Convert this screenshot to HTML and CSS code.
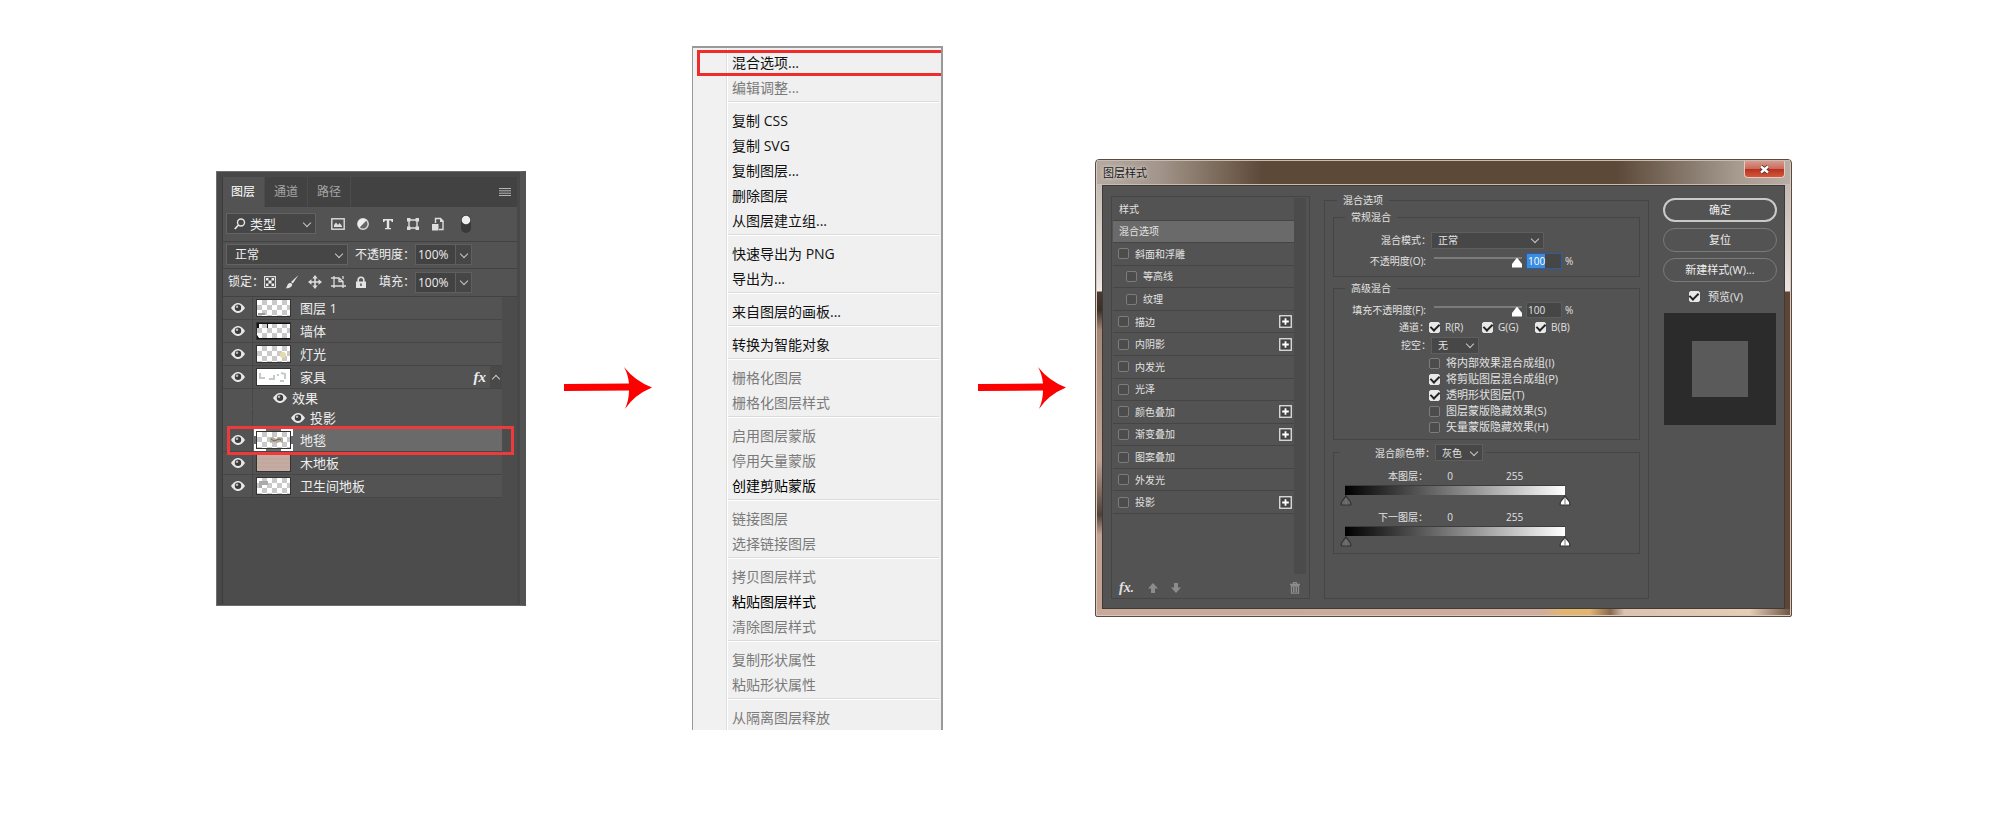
FILE: index.html
```html
<!DOCTYPE html>
<html lang="zh-CN">
<head>
<meta charset="utf-8">
<title>图层样式</title>
<link rel="stylesheet" href="styles.css">
</head>
<body>
<svg class="defs" aria-hidden="true">
  <defs>
    <pattern id="checker" width="10" height="10" patternUnits="userSpaceOnUse">
      <rect width="10" height="10" fill="#fff"/><rect x="5" width="5" height="5" fill="#c9c9c9"/><rect y="5" width="5" height="5" fill="#c9c9c9"/>
    </pattern>
    <symbol id="eye" viewBox="0 0 14 10">
      <path d="M0 5C3 .8 5 0 7 0s4 .8 7 5c-3 4.200-5 5-7 5S3 9.200 0 5z" fill="#e8e8e8"/>
      <circle cx="7" cy="4.800" r="3.200" fill="#3c3c3c"/><circle cx="6" cy="3.800" r="1.300" fill="#bbb"/>
    </symbol>
    <symbol id="plus" viewBox="0 0 13 13">
      <rect x=".75" y=".75" width="11.500" height="11.500" fill="#444" stroke="#e4e4e4" stroke-width="1.300"/><path d="M6.500 3.200v6.600M3.200 6.500h6.600" stroke="#fff" stroke-width="1.800"/>
    </symbol>
    <symbol id="stop" viewBox="0 0 12 11">
      <path d="M6 .8C5 3.500 1.200 6 1.200 8v2h9.600V8C10.800 6 7 3.500 6 .8z" stroke="#333" stroke-width="1.200"/><path d="M6 3v6.500" stroke="#777" stroke-width="1"/>
    </symbol>
    <symbol id="arrow" viewBox="0 0 88 42">
      <path d="M0 17L65 16.500Q64 7 60 0Q71 14 88 20.500Q70 28 61 42Q65 33 65 23.500L0 24z" fill="#fd0000"/>
    </symbol>
  </defs>
</svg>

<main class="steps">
  <section class="layers" aria-label="图层">
    <div class="layers-inner">
      <div class="tabs" role="tablist">
        <button class="tab active" role="tab">图层</button>
        <button class="tab" role="tab">通道</button>
        <button class="tab" role="tab">路径</button>
        <button class="panel-menu" aria-label="面板菜单"><svg width="12" height="8" viewBox="0 0 12 8"><path d="M0 .5h12M0 2.800h12M0 5.200h12M0 7.500h12" stroke="#b5b5b5"/></svg></button>
      </div>
      <div class="tools filter">
        <span class="pick filter-pick">
          <svg class="lens" width="12" height="12" viewBox="0 0 12 12" fill="none" stroke="#e4e4e4"><circle cx="7" cy="4.500" r="3.500" stroke-width="1.400"/><path d="M4.500 7L.8 11" stroke-width="1.800"/></svg>
          <select aria-label="过滤"><option>类型</option></select>
        </span>
        <div class="filter-icons">
          <svg width="14" height="12" viewBox="0 0 14 12"><rect x=".8" y=".8" width="12.400" height="10.400" fill="none" stroke="#ddd" stroke-width="1.400"/><path d="M3 9V7l2-2.500L7 7l1.500-2L11 8v1z" fill="#ddd"/></svg>
          <svg width="14" height="14" viewBox="0 0 14 14"><circle cx="7" cy="7" r="5.200" fill="#666" stroke="#ddd" stroke-width="1.400"/><path d="M3.300 10.700A5.200 5.200 0 0 1 10.700 3.300z" fill="#eee"/></svg>
          <svg width="14" height="12" viewBox="0 0 14 12"><path d="M2 1h10v3h-1.200L10 2.500H8.200V10H10v1.200H4V10h1.800V2.500H4L3.200 4H2z" fill="#e4e4e4"/></svg>
          <svg width="14" height="14" viewBox="0 0 14 14"><path d="M3 3h8v8H3z" fill="none" stroke="#ddd" stroke-width="1.400"/><path d="M1 1h3.500v3.500H1zM9.500 1H13v3.500H9.500zM1 9.500h3.500V13H1zM9.500 9.500H13V13H9.500z" fill="#ddd"/></svg>
          <svg width="14" height="14" viewBox="0 0 14 14"><path d="M4.500 6V1.500h5l2.500 2.500V12.500H8" fill="none" stroke="#ddd" stroke-width="1.400"/><path d="M9 1v4h4z" fill="#ddd"/><rect x="1" y="7" width="6.500" height="6.500" fill="#ddd"/></svg>
        </div>
        <svg width="10" height="18" viewBox="0 0 10 18"><rect width="10" height="18" rx="5" fill="#393939"/><circle cx="5" cy="5" r="4.300" fill="#eee"/></svg>
      </div>
      <div class="tools">
        <span class="pick blend-pick"><select aria-label="混合模式"><option>正常</option></select></span>
        <label class="tool-label" for="opacity">不透明度：</label>
        <input class="percent" id="opacity" value="100%"><button class="drop" aria-label="不透明度滑块"></button>
      </div>
      <div class="tools locks">
        <span>锁定：</span>
        <div class="lock-icons">
          <svg width="12" height="12" viewBox="0 0 12 12"><rect x=".6" y=".6" width="10.800" height="10.800" fill="#444" stroke="#ddd" stroke-width="1.200"/><path d="M2 2h2.500v2.500H2zM7.500 2H10v2.500H7.500zM4.500 4.500h3v3h-3zM2 7.500h2.500V10H2zM7.500 7.500H10V10H7.500z" fill="#eee"/></svg>
          <svg width="14" height="14" viewBox="0 0 14 14"><path d="M13.500 0L6 7l1.800 1.600z" fill="#e4e4e4"/><path d="M5 8c2 0 2.800 1.400 1.800 3C5.500 13 3 13.500.5 13.300 2.500 12.500 2 8 5 8z" fill="#e4e4e4"/></svg>
          <svg width="14" height="14" viewBox="0 0 14 14" fill="#ddd"><path d="M6.200 3h1.600v3.200H11v1.600H7.800V11H6.200V7.800H3V6.200h3.200z"/><path d="M7 0l2.700 3.500H4.300zM7 14l2.700-3.500H4.300zM0 7l3.500-2.700v5.400zM14 7l-3.500-2.700v5.400z"/></svg>
          <svg width="15" height="14" viewBox="0 0 15 14" fill="none" stroke="#ddd" stroke-width="1.300"><path d="M3 1v12M0 3h8l4 3.500V13M0 11h15M12 1v3M8 3v3.500h4"/></svg>
          <svg width="12" height="13" viewBox="0 0 12 13"><path d="M3.200 6V4a2.800 2.800 0 0 1 5.600 0v2" fill="none" stroke="#e4e4e4" stroke-width="1.600"/><path d="M1 5.500h10V12H1z" fill="#e4e4e4"/><path d="M5.300 7.500h1.400v2.500H5.300z" fill="#444"/></svg>
        </div>
        <label class="tool-label" for="fill">填充：</label>
        <input class="percent" id="fill" value="100%"><button class="drop" aria-label="填充滑块"></button>
      </div>
      <div class="stack">
        <ul class="layer-list">
          <li class="layer"><span class="see"><svg width="14" height="10"><use href="#eye"/></svg></span><svg class="thumb" viewBox="0 0 33 16"><rect width="33" height="16" fill="url(#checker)"/><path d="M1 13h7v2H1z" fill="#999"/></svg><span>图层 1</span></li>
          <li class="layer"><span class="see"><svg width="14" height="10"><use href="#eye"/></svg></span><svg class="thumb" viewBox="0 0 33 16"><rect width="33" height="16" fill="url(#checker)"/><path d="M0 0h33v1H11v4h-1V1H2v4H0zM0 12l2 3h31v1H0z" fill="#111"/></svg><span>墙体</span></li>
          <li class="layer"><span class="see"><svg width="14" height="10"><use href="#eye"/></svg></span><svg class="thumb" viewBox="0 0 33 16"><rect width="33" height="16" fill="url(#checker)"/><circle cx="26" cy="9" r="3" fill="#e5dba5"/></svg><span>灯光</span></li>
          <li class="layer"><span class="see"><svg width="14" height="10"><use href="#eye"/></svg></span><svg class="thumb" viewBox="0 0 33 16"><rect width="33" height="16" fill="#fff"/><path d="M3 4v5h5M12 10h5V6M20 6h2M24 4l4 1v5M23 12h4" fill="none" stroke="#c6cac7" stroke-width="2"/></svg><span>家具</span><i class="fx">fx</i><button class="fold" aria-label="折叠效果"></button></li>
          <li class="layer effect"><span class="see"></span><span class="effect-name"><svg width="14" height="10"><use href="#eye"/></svg>效果</span></li>
          <li class="layer effect deeper"><span class="see"></span><span class="effect-name"><svg width="14" height="10"><use href="#eye"/></svg>投影</span></li>
          <li class="layer selected"><span class="see"><svg width="14" height="10"><use href="#eye"/></svg></span><svg class="thumb framed" viewBox="0 0 39 22"><rect x="2" y="2" width="35" height="18" fill="#333"/><g transform="translate(3 3)"><rect width="33" height="16" fill="url(#checker)"/><path d="M13 6l3-1 3 2 3-2 4 1v5l-3-1-3 1-3-1-4 1z" fill="#b3aa98"/><path d="M14 7l3 2 5-2 2 1" stroke="#6e675a" fill="none"/></g><path d="M1 7V1h11M27 1h11v6M38 15v6H27M12 21H1v-6" fill="none" stroke="#fff" stroke-width="2"/></svg><span>地毯</span></li>
          <li class="layer"><span class="see"><svg width="14" height="10"><use href="#eye"/></svg></span><svg class="thumb" viewBox="0 0 33 16"><rect width="33" height="16" fill="#c4aca2"/><path d="M0 4h33M0 8h33M0 12h33" stroke="#bda59b"/></svg><span>木地板</span></li>
          <li class="layer"><span class="see"><svg width="14" height="10"><use href="#eye"/></svg></span><svg class="thumb" viewBox="0 0 33 16"><rect width="33" height="16" fill="url(#checker)"/><path d="M2 3h9v4H5v3H2z" fill="#aaa"/></svg><span>卫生间地板</span></li>
        </ul>
      </div>
    </div>
  </section>

  <svg class="arrow first" width="88" height="42" aria-hidden="true"><use href="#arrow"/></svg>

  <nav class="menu" aria-label="图层菜单">
    <div class="menu-group marked-group"><button class="marked">混合选项...</button><button disabled>编辑调整...</button></div>
    <div class="menu-group"><button>复制 CSS</button><button>复制 SVG</button><button>复制图层...</button><button>删除图层</button><button>从图层建立组...</button></div>
    <div class="menu-group"><button>快速导出为 PNG</button><button>导出为...</button></div>
    <div class="menu-group"><button>来自图层的画板...</button></div>
    <div class="menu-group"><button>转换为智能对象</button></div>
    <div class="menu-group"><button disabled>栅格化图层</button><button disabled>栅格化图层样式</button></div>
    <div class="menu-group"><button disabled>启用图层蒙版</button><button disabled>停用矢量蒙版</button><button class="strong">创建剪贴蒙版</button></div>
    <div class="menu-group"><button disabled>链接图层</button><button disabled>选择链接图层</button></div>
    <div class="menu-group"><button disabled>拷贝图层样式</button><button class="strong">粘贴图层样式</button><button disabled>清除图层样式</button></div>
    <div class="menu-group"><button disabled>复制形状属性</button><button disabled>粘贴形状属性</button></div>
    <div class="menu-group"><button disabled>从隔离图层释放</button></div>
  </nav>

  <svg class="arrow second" width="88" height="42" aria-hidden="true"><use href="#arrow"/></svg>

  <section class="dialog" role="dialog" aria-labelledby="dialog-title">
    <header class="titlebar"><h1 id="dialog-title">图层样式</h1><button class="close" aria-label="关闭"><svg width="11" height="9" viewBox="0 0 11 9"><path d="M2 1.500l7 6M9 1.500l-7 6" stroke="#4c2a26" stroke-width="4"/><path d="M2 1.500l7 6M9 1.500l-7 6" stroke="#fff" stroke-width="2.400"/></svg></button></header>
    <div class="dialog-body">
      <div class="styles">
        <div class="styles-scroll">
          <ul class="style-list">
            <li>样式</li>
            <li class="current">混合选项</li>
            <li><label><input type="checkbox">斜面和浮雕</label></li>
            <li class="sub"><label><input type="checkbox">等高线</label></li>
            <li class="sub"><label><input type="checkbox">纹理</label></li>
            <li><label><input type="checkbox">描边</label><button aria-label="添加描边"><svg width="13" height="13"><use href="#plus"/></svg></button></li>
            <li><label><input type="checkbox">内阴影</label><button aria-label="添加内阴影"><svg width="13" height="13"><use href="#plus"/></svg></button></li>
            <li><label><input type="checkbox">内发光</label></li>
            <li><label><input type="checkbox">光泽</label></li>
            <li><label><input type="checkbox">颜色叠加</label><button aria-label="添加颜色叠加"><svg width="13" height="13"><use href="#plus"/></svg></button></li>
            <li><label><input type="checkbox">渐变叠加</label><button aria-label="添加渐变叠加"><svg width="13" height="13"><use href="#plus"/></svg></button></li>
            <li><label><input type="checkbox">图案叠加</label></li>
            <li><label><input type="checkbox">外发光</label></li>
            <li><label><input type="checkbox">投影</label><button aria-label="添加投影"><svg width="13" height="13"><use href="#plus"/></svg></button></li>
          </ul>
        </div>
        <div class="style-tools">
          <i class="fx">fx<span>.</span></i>
          <svg width="10" height="10" viewBox="0 0 10 10"><path d="M5 0l5 5.500H7V10H3V5.500H0z" fill="#8c8c8c"/></svg>
          <svg width="10" height="10" viewBox="0 0 10 10"><path d="M5 10L0 4.500h3V0h4v4.500h3z" fill="#8c8c8c"/></svg>
          <svg class="trash" width="10" height="12" viewBox="0 0 10 12"><path d="M3.500 2V.7h3V2M0 2.500h10M1.500 4h7v7.200h-7z" fill="none" stroke="#8c8c8c" stroke-width="1.300"/><path d="M3.500 5v5M5 5v5M6.500 5v5" stroke="#8c8c8c"/></svg>
        </div>
      </div>

      <fieldset class="options">
        <legend>混合选项</legend>
        <fieldset class="group general">
          <legend>常规混合</legend>
          <div class="field"><label class="name" for="mode">混合模式：</label><span class="pick wide"><select id="mode"><option>正常</option></select></span></div>
          <div class="field"><label class="name latin" for="op">不透明度(O):</label><input type="range" aria-label="不透明度" value="100"><input class="num focused" id="op" value="100"><span>%</span></div>
        </fieldset>
        <fieldset class="group advanced">
          <legend>高级混合</legend>
          <div class="field"><label class="name latin" for="fo">填充不透明度(F):</label><input type="range" aria-label="填充不透明度" value="100"><input class="num" id="fo" value="100"><span>%</span></div>
          <div class="field channels"><span class="name">通道：</span><label><input type="checkbox" checked>R(R)</label><label><input type="checkbox" checked>G(G)</label><label><input type="checkbox" checked>B(B)</label></div>
          <div class="field"><label class="name" for="knock">挖空：</label><span class="pick small"><select id="knock"><option>无</option></select></span></div>
          <div class="checks">
            <label><input type="checkbox">将内部效果混合成组(I)</label>
            <label><input type="checkbox" checked>将剪贴图层混合成组(P)</label>
            <label><input type="checkbox" checked>透明形状图层(T)</label>
            <label><input type="checkbox">图层蒙版隐藏效果(S)</label>
            <label><input type="checkbox">矢量蒙版隐藏效果(H)</label>
          </div>
        </fieldset>
        <fieldset class="group blend-if">
          <legend><label for="band">混合颜色带：</label><span class="pick small"><select id="band"><option>灰色</option></select></span></legend>
          <div class="range-head"><span class="range-name">本图层：</span><span class="low">0</span><span class="high">255</span></div>
          <div class="ramp"></div>
          <div class="stops"><svg width="12" height="11" fill="#666"><use href="#stop"/></svg><svg width="12" height="11" fill="#fff"><use href="#stop"/></svg></div>
          <div class="range-head"><span class="range-name">下一图层：</span><span class="low">0</span><span class="high">255</span></div>
          <div class="ramp"></div>
          <div class="stops"><svg width="12" height="11" fill="#666"><use href="#stop"/></svg><svg width="12" height="11" fill="#fff"><use href="#stop"/></svg></div>
        </fieldset>
      </fieldset>

      <div class="actions">
        <button class="pill primary">确定</button>
        <button class="pill">复位</button>
        <button class="pill">新建样式(W)...</button>
        <label class="preview-toggle"><input type="checkbox" checked>预览(V)</label>
        <div class="preview"><div class="swatch"></div></div>
      </div>
    </div>
  </section>
</main>
</body>
</html>
```
FILE: styles.css
```css
* { box-sizing: border-box; }

body {
  margin: 0;
  background: #fff;
  font-family: "Open Sans", "Noto Sans CJK SC", sans-serif;
}

button, input, select {
  margin: 0;
  padding: 0;
  border: 0;
  background: none;
  color: inherit;
  font: inherit;
  appearance: none;
  outline: 0;
}

ul { margin: 0; padding: 0; list-style: none; }
svg { display: block; flex: none; }
.defs { position: absolute; width: 0; height: 0; }

.steps {
  display: flex;
  justify-content: center;
  align-items: center;
  min-height: 100vh;
  padding-bottom: 44px;
}

.arrow.first { margin: 0 40px 0 38px; }
.arrow.second { margin: 0 29px 0 35px; }

/* Drop-downs shared by the panel and the dialog */
.pick {
  position: relative;
  display: flex;
  align-items: center;
  background: #464646;
  border: 1px solid #636363;
}
.pick select { flex: 1; min-width: 0; align-self: stretch; }
.pick::after, .drop::after, .fold::after {
  content: "";
  width: 5px;
  height: 5px;
  border: solid #c8c8c8;
  border-width: 0 1px 1px 0;
  rotate: 45deg;
  translate: 0 -1px;
}
.pick::after { position: absolute; right: 5px; pointer-events: none; }

/* Layers panel */
.layers {
  width: 310px;
  padding: 5px 3px 1px 5px;
  background: #484848;
  border: solid #6f6f6f;
  border-width: 1px 0 1px 1px;
  border-right: 6px solid #535353;
  color: #eee;
  font-size: 12px;
  line-height: 18px;
  white-space: nowrap;
}
.layers-inner { background: #535353; border-left: 1px solid #3c3c3c; }
.tabs { display: flex; height: 30px; background: #424242; }
.tab { padding: 0 9px; color: #a5a5a5; border-right: 1px solid #4c4c4c; }
.tab.active { padding-left: 8px; background: #535353; color: #fff; }
.panel-menu { margin-left: auto; padding: 0 6px; }

.tools {
  display: flex;
  align-items: center;
  height: 27px;
  padding-left: 3px;
  border-bottom: 1px solid #424242;
}
.tools .pick { height: 21px; }
.tools.filter { height: 35px; }
.tools.locks { height: 28px; padding-left: 5px; }
.filter-pick { width: 90px; font-size: 13px; }
.filter-pick .lens { margin: 0 4px 0 7px; }
.blend-pick { width: 122px; }
.blend-pick select { padding-left: 8px; }
.filter-icons { display: flex; align-items: center; gap: 11px; margin: 0 16px 0 15px; }
.lock-icons { display: flex; align-items: center; gap: 9px; }
.tool-label { margin-left: auto; }
.percent {
  flex: none;
  width: 41px;
  height: 21px;
  padding-left: 2px;
  background: #424242;
  border: 1px solid #5f5f5f;
}
.drop {
  display: grid;
  place-items: center;
  width: 16px;
  height: 21px;
  margin-right: 45px;
  background: #464646;
  border: 1px solid #5f5f5f;
  border-left: 0;
}

.stack { min-height: 307px; padding-right: 15px; background: #4c4c4c; }
.layer {
  display: flex;
  align-items: center;
  height: 23px;
  background: #535353;
  border-bottom: 1px solid #464646;
  font-size: 13px;
}
.layer .see {
  display: grid;
  place-items: center;
  align-self: stretch;
  width: 30px;
  margin-right: 4px;
  border-right: 1px solid #474747;
}
.thumb { width: 33px; height: 16px; margin-right: 10px; outline: 1px solid #333; }
.thumb.framed { width: 39px; height: 22px; margin: 0 7px 0 -3px; outline: 0; }
.layer .fx { margin-left: auto; }
.fx { font-family: "Liberation Serif", serif; font-size: 15px; font-style: italic; font-weight: 700; }
.fold { display: grid; place-items: center; width: 12px; align-self: stretch; margin-left: 4px; background: #494949; }
.fold::after { rotate: 225deg; translate: 0 2px; }
.effect { height: 20px; border-bottom-color: #535353; }
.effect-name { display: flex; align-items: center; gap: 5px; margin-left: 16px; }
.deeper .effect-name { margin-left: 34px; }
.selected {
  position: relative;
  background: #6a6a6a;
}
.selected .see { background: #535353; }
.selected::after {
  content: "";
  position: absolute;
  inset: -3px -12px -4px 4px;
  border: 3px solid #ee3a3a;
}

/* Context menu */
.menu {
  width: 251px;
  height: 684px;
  padding-top: 2px;
  overflow: hidden;
  border: solid #999;
  border-width: 2px 2px 0 1px;
  background: linear-gradient(90deg, #f1f1f1 33px, #dedede 33px, #dedede 34px, #fff 34px, #fff 35px, #f0f0f0 35px);
  color: #111;
  font-size: 14px;
}
.menu-group + .menu-group {
  margin-left: 35px;
  margin-right: 2px;
  padding-top: 6px;
  border-top: 1px solid #dcdcdc;
  box-shadow: inset 0 1px #fff;
  margin-top: 1px;
}
.menu button { display: block; width: 100%; height: 25px; padding-left: 4px; text-align: left; line-height: 20px; }
.menu .marked-group button { padding-left: 39px; }
.menu button:disabled { color: #7a7a7a; }
.menu .strong { color: #000; }
.menu .marked {
  position: relative;
}
.menu .marked::after {
  content: "";
  position: absolute;
  inset: 0 -2px -1px 4px;
  border: 3px solid #ee2c2c;
  border-right: 0;
}

/* Layer style dialog */
.dialog {
  width: 697px;
  padding: 0 6px 7px;
  border: 1px solid #5b4a42;
  border-radius: 4px 4px 2px 2px;
  background:
    linear-gradient(90deg, #c9a999 0 20%, #cfae9d 64%, #e3b66f 67%, #e3b66f 71%, #8a6a50 74%, #dcc3ae 76%, #e8cdb5 94%, #6b5443) bottom / 100% 7px no-repeat,
    linear-gradient(#b9b0a9, #e9e4e0 120px, #f1ecea 131px, #4a3a30 132px, #3a2e28 150px, #a58775 170px, #c4a393 300px, #50403a 355px, #c4a393 375px) left / 7px 100% no-repeat,
    linear-gradient(#b9b0a9, #e9e4e0 131px, #5d4636 132px) right / 7px 100% no-repeat;
  box-shadow: inset 0 0 0 1px #d8c8bd;
  font-size: 10px;
  line-height: 14px;
  color: #e2e2e2;
}
.titlebar {
  display: flex;
  justify-content: space-between;
  align-items: center;
  height: 25px;
  margin: 0 -5px;
  padding: 0 5px 0 6px;
  border-top: 1px solid #c9bcb1;
  border-bottom: 1px solid #c9bcb1;
  background: linear-gradient(90deg, #b5aaa2, #a3968c 60px, #8a7a6c 100px, #5d4938 165px, #5d4938 520px, #8c7f73 600px, #a79b8f 640px, #b9aea5);
}
.titlebar h1 { margin: 0; color: #1d1a18; font-size: 11px; font-weight: 400; text-shadow: 0 0 4px #fff; }
.close {
  display: grid;
  place-items: center;
  align-self: start;
  width: 41px;
  height: 17px;
  border: 1px solid #e8c8c0;
  border-top: 0;
  border-radius: 0 0 4px 4px;
  background: linear-gradient(#d99a8c, #c9695a 50%, #b8301c 50%, #d2573c);
}
.dialog-body {
  display: grid;
  grid-template-columns: 199px 1fr 114px;
  column-gap: 14px;
  padding: 7px 7px 9px 8px;
  min-height: 424px;
  background: #535353;
  border: 1px solid #3f3a38;
}

.dialog input[type="checkbox"] {
  flex: none;
  width: 11px;
  height: 11px;
  border: 1px solid #7c7c7c;
  border-radius: 2px;
  background: #4c4c4c;
}
.dialog input[type="checkbox"]:checked {
  display: grid;
  place-items: center;
  border-color: #e8e8e8;
  background: #e8e8e8;
}
.dialog input[type="checkbox"]:checked::after {
  content: "";
  width: 4px;
  height: 7px;
  border: solid #222;
  border-width: 0 2px 2px 0;
  rotate: 45deg;
  translate: 0 -1px;
}
.dialog label { display: flex; align-items: center; }

.styles {
  display: flex;
  flex-direction: column;
  margin-top: 3px;
  padding: 1px 3px 0 1px;
  border: 1px solid #454545;
}
.styles-scroll { flex: 1; padding-right: 12px; background: linear-gradient(90deg, #535353 calc(100% - 12px), #4b4b4b 0); }
.style-list { display: grid; grid-auto-rows: 1fr; min-height: 316px; }
.style-list li {
  display: flex;
  align-items: center;
  justify-content: space-between;
  padding: 0 2px 0 6px;
  border-bottom: 1px solid #454545;
}
.style-list label { gap: 6px; margin-left: -1px; }
.style-list .sub { padding-left: 14px; }
.style-list .current { background: #6a6a6a; }
.style-tools { display: flex; align-items: center; gap: 13px; height: 24px; padding: 4px 6px 0; }
.style-tools .fx { width: 16px; line-height: 16px; font-size: 14px; }
.style-tools .fx span { font-size: 12px; }
.trash { margin-left: auto; }

fieldset { min-width: 0; margin: 0; padding: 0; border: 1px solid #454545; }
legend { margin-left: 11px; padding: 0 6px; }
.options { padding: 3px 8px 0; }
.options > legend { margin-left: 4px; }
.group.general { padding: 8px 0 7px; margin-bottom: 4px; }
.group.advanced { padding: 7px 0 5px; margin-bottom: 4px; }
.field { display: flex; align-items: center; height: 16px; margin-bottom: 5px; }
.general .field:last-child { margin-bottom: 0; }
.advanced .field { margin-bottom: 2px; }
.advanced .field:first-of-type { margin-bottom: 1px; }
.dialog .name { display: block; width: 97px; text-align: right; }
.dialog .latin { padding-right: 5px; }
.dialog .pick { height: 17px; background: #474747; border-color: #5e5e5e; }
.dialog .pick select { padding-left: 6px; }
.pick.wide { width: 113px; }
.pick.small { width: 48px; }

input[type="range"] { width: 88px; height: 2px; margin: 4px 4px 0 3px; background: #7b7b7b; align-self: start; }
input[type="range"]::-webkit-slider-thumb {
  appearance: none;
  width: 10px;
  height: 10px;
  margin-top: 9px;
  background: #fff;
  clip-path: polygon(50% 0, 100% 65%, 100% 100%, 0 100%, 0 65%);
}
.num { width: 36px; height: 16px; margin-right: 3px; padding-left: 1px; background: #464646; border: 1px solid #5c5c5c; }
.num.focused {
  border-color: #2a5ca8;
  background: linear-gradient(90deg, #3c8ddf 18px, transparent 18px) #464646;
  color: #fff;
}
.channels label { width: 53px; gap: 5px; }
.channels .name { width: 95px; }
.checks { display: grid; row-gap: 2px; padding: 1px 0 0 95px; font-size: 11px; }
.checks label { gap: 6px; }

.blend-if { padding: 0 68px 6px 6px; }
.blend-if legend { display: flex; align-items: center; justify-content: flex-end; width: 146px; margin-left: 0; padding-right: 3px; padding-left: 0; }
.range-head { display: grid; grid-template-columns: 90px 40px 1fr; height: 14px; margin-top: 8px; }
.blend-if .range-head ~ .range-head { margin-top: 4px; }
.range-name { padding-right: 2px; text-align: right; }
.low { text-align: center; }
.high { padding-left: 36px; }
.ramp { height: 10px; margin: 2px 6px 0 5px; border-top: 1px solid #3c3c3c; background: linear-gradient(90deg, #000, #fff); }
.stops { display: flex; justify-content: space-between; }

.actions { margin-top: 5px; font-size: 11px; }
.pill {
  display: block;
  width: 100%;
  height: 24px;
  margin-bottom: 6px;
  border: 1px solid #7a7a7a;
  border-radius: 12px;
  color: #eee;
}
.pill.primary { border: 2px solid #c9c9c9; }
.dialog .preview-toggle { gap: 8px; justify-content: center; height: 17px; padding-right: 8px; }
.preview { display: grid; place-items: center; aspect-ratio: 1; margin: 8px 1px 0; background: #2b2b2b; }
.swatch { width: 50%; aspect-ratio: 1; background: #5a5a5a; }
```
